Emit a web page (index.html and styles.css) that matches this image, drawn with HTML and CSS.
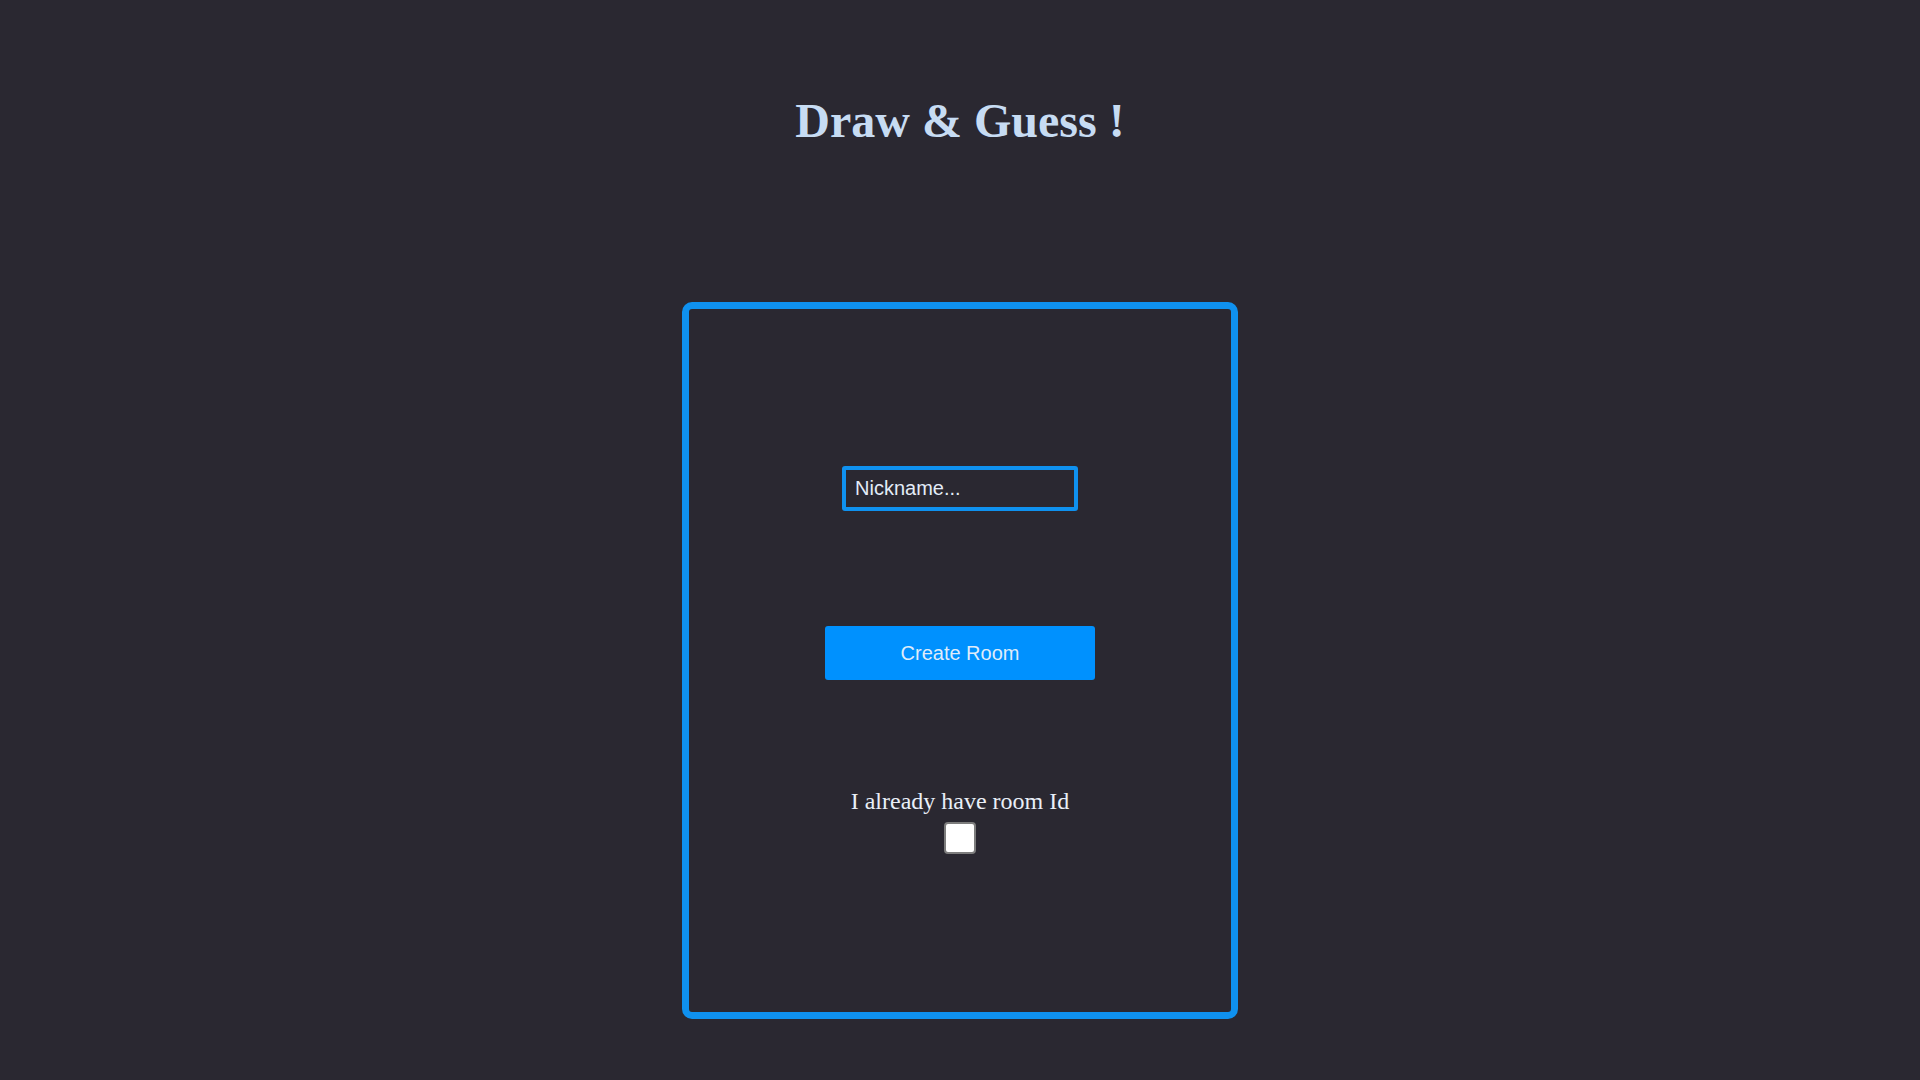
FILE: index.html
```html
<!DOCTYPE html>
<html lang="en">
<head>
<meta charset="utf-8">
<title>Draw & Guess</title>
<link rel="stylesheet" href="styles.css">
</head>
<body>
  <h1 class="title">Draw &amp; Guess !</h1>
  <main class="panel">
    <input class="nickname" type="text" placeholder="Nickname...">
    <button class="create-btn" type="button">Create Room</button>
    <label class="room-label" for="has-room">I already have room Id</label>
    <input class="room-check" id="has-room" type="checkbox">
  </main>
</body>
</html>
```

FILE: styles.css
```css
html, body {
  margin: 0;
  padding: 0;
}

body {
  background: #2a2831;
  min-height: 1080px;
  display: flex;
  flex-direction: column;
  align-items: center;
  font-family: "Liberation Serif", "Times New Roman", serif;
}

.title {
  margin: 93px 0 0 0;
  font-family: "Liberation Serif", "Times New Roman", serif;
  font-weight: bold;
  font-size: 48px;
  line-height: 56px;
  color: #c7dcf3;
}

.panel {
  margin-top: 153px;
  box-sizing: border-box;
  width: 556px;
  height: 717px;
  border: 7px solid #0f91ef;
  border-radius: 10px;
  display: flex;
  flex-direction: column;
  align-items: center;
}

.nickname {
  margin-top: 157px;
  box-sizing: border-box;
  width: 236px;
  height: 45px;
  border: 4px solid #0f91ef;
  border-radius: 3px;
  background: transparent;
  padding: 0 0 0 9px;
  font-family: "Liberation Sans", Arial, sans-serif;
  font-size: 20px;
  color: #e3ecf8;
  outline: none;
}

.nickname::placeholder {
  color: #e3ecf8;
  opacity: 1;
}

.create-btn {
  margin-top: 115px;
  width: 270px;
  height: 54px;
  border: none;
  border-radius: 3px;
  background: #0091fe;
  color: #dfecfa;
  font-family: "Liberation Sans", Arial, sans-serif;
  font-size: 20px;
  cursor: pointer;
}

.room-label {
  margin-top: 107px;
  font-size: 24px;
  line-height: 28px;
  color: #e9eff8;
}

.room-check {
  -webkit-appearance: none;
  appearance: none;
  margin: 7px 0 0 0;
  box-sizing: border-box;
  width: 32px;
  height: 32px;
  background: #ffffff;
  border: 2px solid #7d7d7d;
  border-radius: 4px;
}
```
